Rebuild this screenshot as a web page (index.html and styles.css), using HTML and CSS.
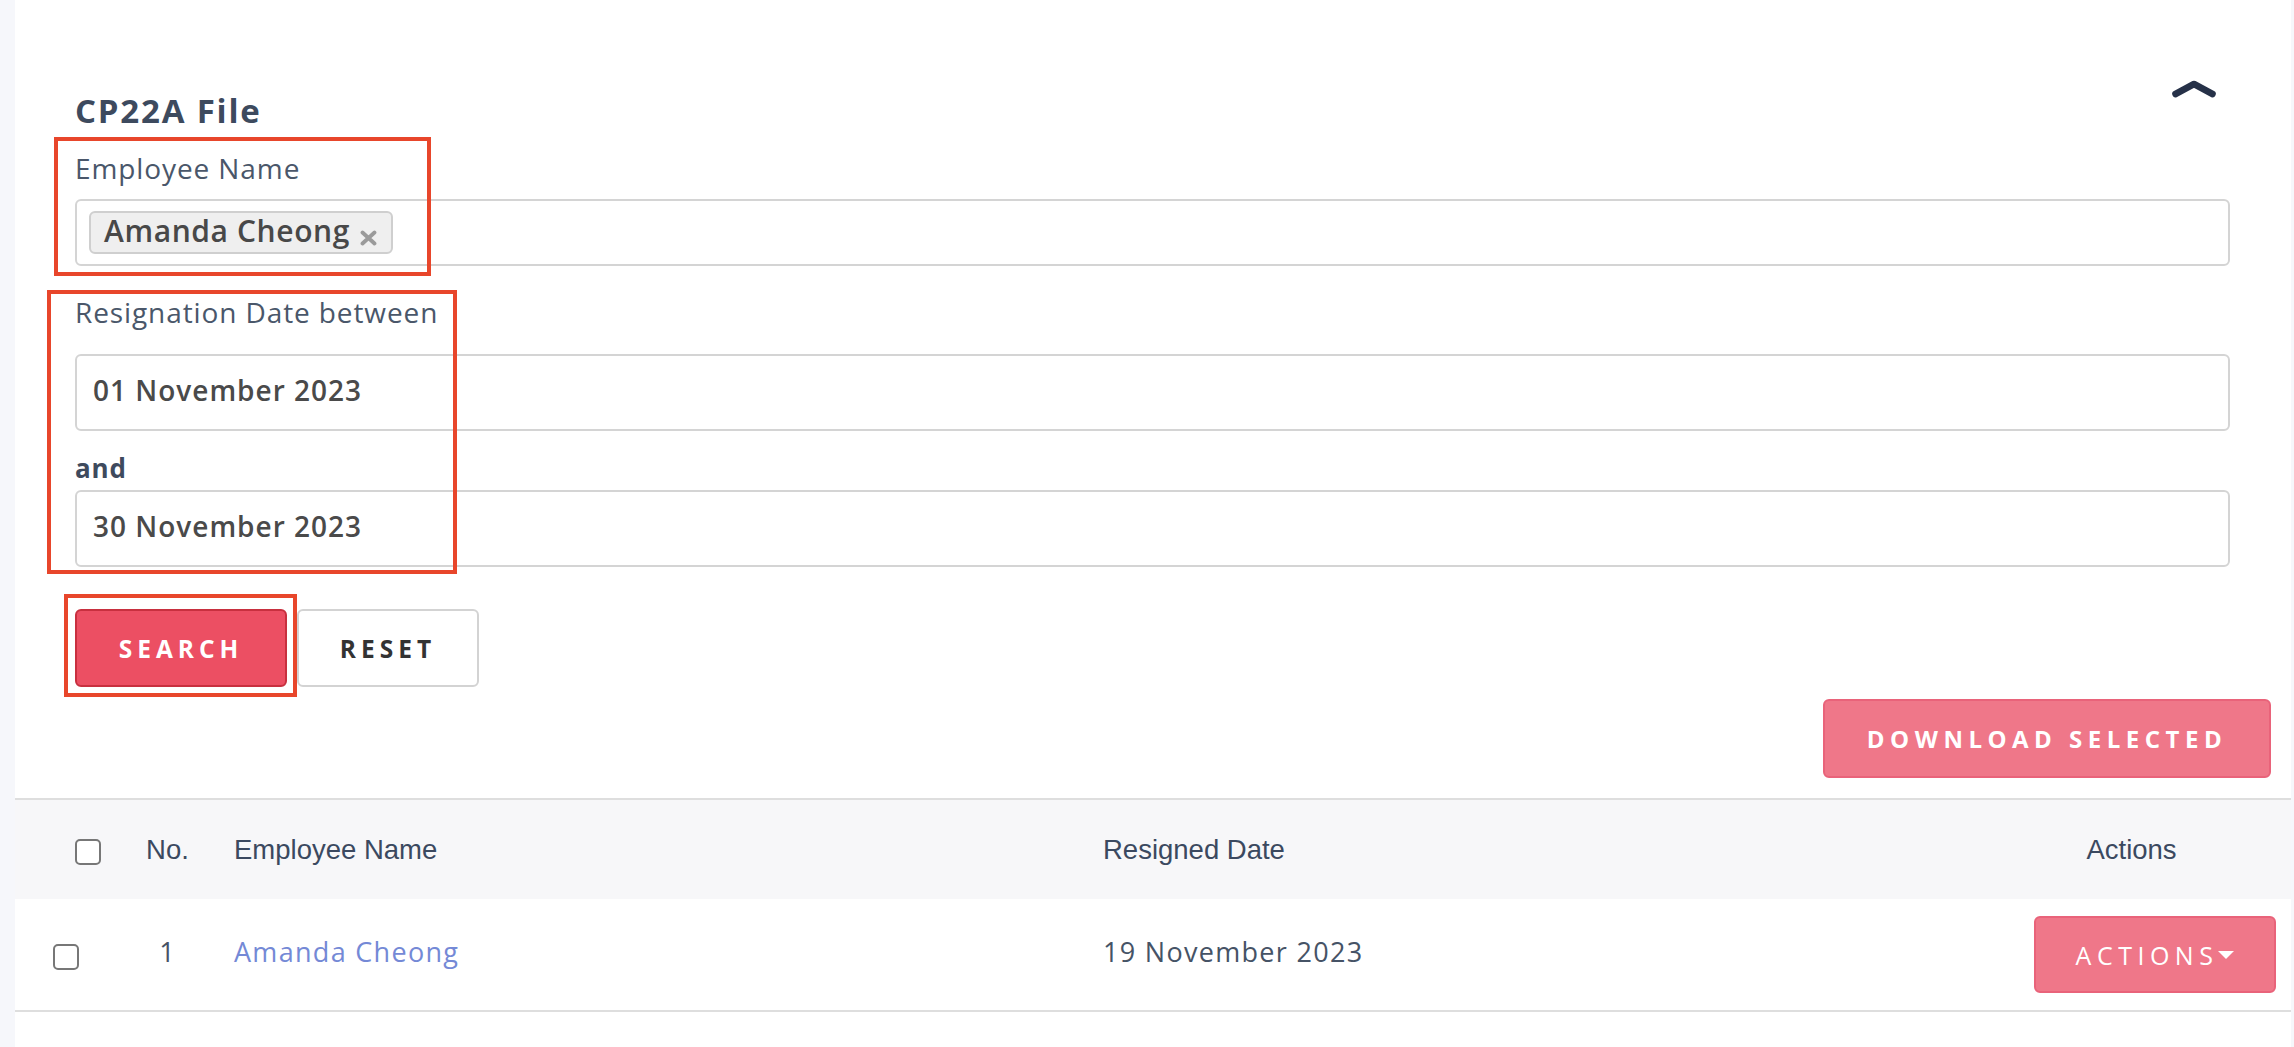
FILE: index.html
```html
<!DOCTYPE html>
<html lang="en">
<head>
<meta charset="utf-8">
<title>CP22A File</title>
<link rel="stylesheet" href="styles.css">
</head>
<body>
<div class="page">
  <main class="card">
    <section class="filters">
      <div class="head">
        <h2 class="title">CP22A File</h2>
        <svg class="chev" viewBox="0 0 46 20" aria-hidden="true"><path d="M4.5 15 L23 5 L41.5 15" fill="none" stroke="#263148" stroke-width="6.6" stroke-linecap="round" stroke-linejoin="round"/></svg>
      </div>

      <div class="field field-name">
        <label class="label">Employee Name</label>
        <div class="input input-tags">
          <span class="tag"><span class="tag-text">Amanda Cheong</span><svg class="tag-x" viewBox="0 0 17 16" aria-hidden="true"><path d="M2.5 2.5 L14.5 13.5 M14.5 2.5 L2.5 13.5" stroke="#9a9a9a" stroke-width="3.8" stroke-linecap="round"/></svg></span>
        </div>
        <span class="mark mark-name"></span>
      </div>

      <div class="field field-date">
        <label class="label label-date">Resignation Date between</label>
        <div class="input input-date">01 November 2023</div>
        <div class="and">and</div>
        <div class="input input-date">30 November 2023</div>
        <span class="mark mark-date"></span>
      </div>

      <div class="btn-row">
        <button class="btn btn-search">SEARCH</button>
        <button class="btn btn-reset">RESET</button>
        <span class="mark mark-search"></span>
      </div>
    </section>

    <div class="dl-row">
      <button class="btn btn-download">DOWNLOAD SELECTED</button>
    </div>

    <div class="table">
      <div class="tr thead">
        <div class="th c-check-h"><input type="checkbox" class="cb"></div>
        <div class="th c-no">No.</div>
        <div class="th c-name">Employee Name</div>
        <div class="th c-date">Resigned Date</div>
        <div class="th c-act-h">Actions</div>
      </div>
      <div class="tr trow">
        <div class="td c-check-r"><input type="checkbox" class="cb"></div>
        <div class="td c-no txt">1</div>
        <div class="td c-name txt"><a class="link" href="#">Amanda Cheong</a></div>
        <div class="td c-date txt">19 November 2023</div>
        <div class="td c-act-r">
          <button class="btn btn-actions">ACTIONS<svg class="caret" viewBox="0 0 16 8" aria-hidden="true"><polygon points="0,0 16,0 8,8" fill="#fff"/></svg></button>
        </div>
      </div>
    </div>
  </main>
</div>
</body>
</html>
```

FILE: styles.css
```css
* { box-sizing: border-box; }

html, body { margin: 0; padding: 0; }

body {
  background: #f6f7fb;
  font-family: "Open Sans", "Noto Sans", sans-serif;
}

.page { padding: 0 3px 0 15px; }

.card {
  background: #fff;
  min-height: 1047px;
  padding-top: 79px;
}

.filters { padding: 0 61px 0 60px; }

.head {
  display: flex;
  justify-content: space-between;
  align-items: flex-start;
}

.title {
  margin: 12px 0 0;
  font-size: 33px;
  line-height: 40px;
  font-weight: 700;
  color: #3d4a5e;
  letter-spacing: 1.8px;
}

.chev {
  width: 46px;
  height: 20px;
  margin-right: 13px;
  display: block;
}

.field { position: relative; }
.field-name { margin-top: 20px; }
.field-date { margin-top: 29px; }

.label {
  display: block;
  font-size: 28px;
  line-height: 34px;
  color: #4a576a;
  letter-spacing: 0.9px;
  margin-bottom: 14px;
}
.label-date { margin-bottom: 25px; }

.input {
  border: 2px solid #d4d4d4;
  border-radius: 6px;
  background: #fff;
}

.input-tags {
  height: 67px;
  padding: 10px 12px;
}

.tag {
  display: inline-flex;
  align-items: flex-start;
  height: 43px;
  border: 2px solid #cfcfcf;
  background: #efefef;
  border-radius: 6px;
  padding: 0 14px 0 13px;
  font-weight: 600;
  font-size: 30px;
  line-height: 35px;
  color: #484848;
  letter-spacing: 0.6px;
}

.tag-x {
  width: 17px;
  height: 16px;
  margin: 17px 0 0 10px;
  display: block;
}

.input-date {
  height: 77px;
  padding-left: 16px;
  font-size: 28px;
  font-weight: 600;
  line-height: 68px;
  color: #4a4a4a;
  letter-spacing: 1px;
}

.and {
  margin: 21px 0 6px;
  font-size: 26px;
  line-height: 32px;
  font-weight: 700;
  color: #3e4a5d;
  letter-spacing: 0.8px;
}

.btn-row {
  position: relative;
  display: flex;
  gap: 10px;
  margin-top: 42px;
}

.btn {
  height: 78px;
  border-radius: 6px;
  font-family: "Open Sans", "Noto Sans", sans-serif;
  font-weight: 700;
  letter-spacing: 5px;
  display: inline-flex;
  align-items: center;
  justify-content: center;
  padding: 0;
  cursor: pointer;
}

.btn-search {
  width: 212px;
  background: #ec4f63;
  border: 2px solid #c8303f;
  color: #fff;
  font-size: 24.5px;
}

.btn-reset {
  width: 182px;
  background: #fff;
  border: 2px solid #d3d3d3;
  color: #333;
  font-size: 24.5px;
}

.dl-row {
  display: flex;
  justify-content: flex-end;
  padding-right: 20px;
  margin-top: 12px;
}

.btn-download {
  width: 448px;
  height: 79px;
  background: #ef7789;
  border: 2px solid #e9637a;
  color: #fff;
  font-size: 24px;
  letter-spacing: 5.5px;
}

.table {
  margin-top: 20px;
  border-top: 2px solid #dedede;
}

.tr {
  display: grid;
  grid-template-columns: 110px 85px 869px 893px 319px;
  align-items: center;
}

.thead {
  height: 99px;
  background: #f7f7f9;
}

.trow {
  height: 113px;
  border-bottom: 2px solid #dedede;
}

.th {
  font-family: "Liberation Sans", Arial, sans-serif;
  font-size: 27.5px;
  line-height: 32px;
  color: #3b4960;
}

.td {
  font-size: 27px;
  letter-spacing: 1.3px;
  color: #465366;
}

.txt { padding-bottom: 6px; }

.c-check-h { padding-left: 60px; }
.c-check-r { padding-left: 38px; }
.c-no { text-align: center; }
.c-name, .c-date { padding-left: 24px; }
.c-act-h { text-align: center; }
.c-act-r {
  display: flex;
  justify-content: flex-end;
  padding-right: 15px;
}

.cb {
  appearance: none;
  -webkit-appearance: none;
  width: 26px;
  height: 26px;
  border: 2px solid #777;
  border-radius: 5px;
  margin: 4px 0 0;
  display: block;
  background: #fff;
}

.link {
  color: #7489d6;
  text-decoration: none;
}

.btn-actions {
  width: 242px;
  height: 77px;
  background: #ef7789;
  border: 2px solid #e9637a;
  color: #fff;
  font-weight: 400;
  font-size: 25px;
  letter-spacing: 5.5px;
}

.caret {
  width: 16px;
  height: 8px;
  display: block;
}

.mark {
  position: absolute;
  border: 4px solid #e8462b;
  pointer-events: none;
}
.mark-name { left: -21px; top: -14px; width: 377px; height: 139px; }
.mark-date { left: -28px; top: -5px; width: 410px; height: 284px; }
.mark-search { left: -11px; top: -15px; width: 233px; height: 103px; }
```
